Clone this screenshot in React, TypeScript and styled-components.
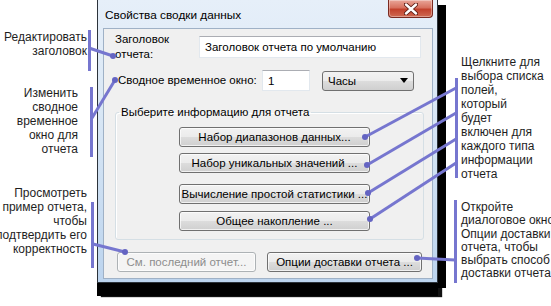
import React from 'react';
import styled, { createGlobalStyle } from 'styled-components';

const GlobalStyle = createGlobalStyle`
  html, body {
    margin: 0;
    background: #fff;
    overflow: hidden;
  }
`;

const CALLOUT = '#7676cf';

const Page = styled.div`
  position: relative;
  display: flex;
  width: 551px;
  height: 306px;
  overflow: hidden;
  font-family: 'Liberation Sans', Arial, sans-serif;
`;

const NotesColumn = styled.div<{ $width: number }>`
  display: flex;
  flex-direction: column;
  flex-shrink: 0;
  width: ${(p) => p.$width}px;
`;

const Note = styled.div<{ $top: number; $right?: number; $align?: 'start' | 'end'; $lh?: number }>`
  display: flex;
  flex-direction: column;
  align-items: ${(p) => (p.$align === 'start' ? 'flex-start' : 'flex-end')};
  margin-top: ${(p) => p.$top}px;
  padding-right: ${(p) => p.$right ?? 0}px;
  padding-left: ${(p) => (p.$align === 'start' ? 15 : 0)}px;
  font-size: 12px;
  line-height: ${(p) => p.$lh ?? 14}px;
  color: #1e1e1e;
`;

const NoteLine = styled.span`
  display: block;
  white-space: nowrap;
`;

const Window = styled.div`
  flex-shrink: 0;
  box-sizing: border-box;
  width: 341px;
  height: 283px;
  margin-left: 9px;
  margin-right: 8px;
  padding: 0 4px 3px 5px;
  border: 1px solid #2c333b;
  border-top: none;
  background: linear-gradient(to bottom, #e6eff9 0%, #d9e7f5 40%, #bcd4ee 100%);
  box-shadow: 8px 5px 0 #000, 0 13px 0 #000, 4px 14px 1px #111;
  font-size: 11.5px;
  color: #000;
`;

const TitleBar = styled.div`
  display: flex;
  justify-content: space-between;
  align-items: flex-start;
  height: 28px;
`;

const Title = styled.div`
  padding: 8px 0 0 2px;
  font-size: 11.8px;
  line-height: 15px;
`;

const CloseButton = styled.div`
  display: flex;
  align-items: center;
  justify-content: center;
  width: 45px;
  height: 18px;
  box-sizing: border-box;
  border: 1px solid #7a2a20;
  border-top: none;
  border-radius: 0 0 4px 4px;
  background: linear-gradient(to bottom, #e9a699 0%, #d7715f 45%, #c2412c 55%, #cf6a52 100%);
  box-shadow: inset 0 0 0 1px rgba(255, 255, 255, 0.35);
`;

const Client = styled.div`
  display: flex;
  flex-direction: column;
  box-sizing: border-box;
  height: 251px;
  border: 1px solid #9fb1c6;
  background: #f0f0f0;
`;

const Row = styled.div<{ $top: number; $left: number; $height: number }>`
  display: flex;
  align-items: center;
  height: ${(p) => p.$height}px;
  margin-top: ${(p) => p.$top}px;
  padding-left: ${(p) => p.$left}px;
`;

const FieldLabel = styled.div<{ $width: number }>`
  flex-shrink: 0;
  width: ${(p) => p.$width}px;
  line-height: 15px;
  white-space: nowrap;
`;

const TextInput = styled.div<{ $width: number; $height: number }>`
  box-sizing: border-box;
  width: ${(p) => p.$width}px;
  height: ${(p) => p.$height}px;
  padding-left: 5px;
  display: flex;
  align-items: center;
  background: #fff;
  border: 1px solid #e2e8ee;
  border-top-color: #abadb3;
`;

const Select = styled.div`
  box-sizing: border-box;
  display: flex;
  align-items: center;
  justify-content: space-between;
  width: 92px;
  height: 20px;
  margin-left: 12px;
  padding: 0 5px;
  border: 1px solid #707070;
  border-radius: 3px;
  background: linear-gradient(to bottom, #f2f2f2 0%, #ebebeb 50%, #dddddd 50%, #cfcfcf 100%);
`;

const Arrow = styled.span`
  width: 0;
  height: 0;
  border-left: 4px solid transparent;
  border-right: 4px solid transparent;
  border-top: 5px solid #000;
`;

const Group = styled.fieldset`
  box-sizing: border-box;
  width: 309px;
  margin: 14px 0 0 11px;
  padding: 7px 0 8px 0;
  border: 1px solid #d5dfe5;
  border-radius: 3px;
  box-shadow: inset 1px 1px 0 #fff;
`;

const Legend = styled.legend`
  margin-left: 3px;
  padding: 0 2px;
  line-height: 15px;
`;

const GroupButtons = styled.div`
  display: flex;
  flex-direction: column;
  align-items: flex-start;
  padding-left: 63px;
`;

const Button = styled.div<{ $width: number; $top?: number; $disabled?: boolean }>`
  box-sizing: border-box;
  display: flex;
  align-items: center;
  justify-content: center;
  width: ${(p) => p.$width}px;
  height: 20px;
  margin-top: ${(p) => p.$top ?? 0}px;
  border: 1px solid ${(p) => (p.$disabled ? '#adb2b5' : '#707070')};
  border-radius: 3px;
  white-space: nowrap;
  color: ${(p) => (p.$disabled ? '#8d8d8d' : '#000')};
  background: ${(p) =>
    p.$disabled
      ? '#f4f4f4'
      : 'linear-gradient(to bottom, #f2f2f2 0%, #ebebeb 50%, #dddddd 50%, #cfcfcf 100%)'};
  box-shadow: inset 0 0 0 1px rgba(255, 255, 255, 0.7);
`;

const ButtonRow = styled.div`
  display: flex;
  gap: 11px;
  margin: 12px 0 0 13px;
`;

const Overlay = styled.svg`
  position: absolute;
  left: 0;
  top: 0;
  pointer-events: none;
`;

const bars = [
  { x: 88, y: 30, h: 41 },
  { x: 90, y: 87, h: 70 },
  { x: 91, y: 202, h: 66 },
  { x: 455, y: 78, h: 100 },
  { x: 454, y: 200, h: 83 },
];

const leaders = [
  [89, 48, 113, 56],
  [92, 118, 115, 80],
  [93, 244, 125, 252],
  [456, 88, 365, 137],
  [456, 113, 367, 165],
  [456, 139, 368, 193],
  [456, 163, 370, 219],
  [455, 260, 417, 258],
];

const leftNotes = [
  { top: 30, right: 1, lines: ['Редактировать', 'заголовок'] },
  { top: 28, right: 10, lines: ['Изменить', 'сводное', 'временное', 'окно для', 'отчета'] },
  { top: 30, right: 1, lines: ['Просмотреть', 'пример отчета,', 'чтобы', 'подтвердить его', 'корректность'] },
];

const rightNotes = [
  {
    top: 55,
    lh: 14,
    lines: ['Щелкните для', 'выбора списка', 'полей,', 'который', 'будет', 'включен для', 'каждого типа', 'информации', 'отчета'],
  },
  {
    top: 20,
    lh: 13.3,
    lines: ['Откройте', 'диалоговое окно', 'Опции доставки', 'отчета, чтобы', 'выбрать способ', 'доставки отчета'],
  },
];

const groupButtons = [
  { label: 'Набор диапазонов данных...', top: 0 },
  { label: 'Набор уникальных значений ...', top: 6 },
  { label: 'Вычисление простой статистики ...', top: 11 },
  { label: 'Общее накопление ...', top: 7 },
];

const App: React.FC = () => (
  <>
    <GlobalStyle />
    <Page>
      <NotesColumn $width={88}>
        {leftNotes.map((n, i) => (
          <Note key={i} $top={n.top} $right={n.right}>
            {n.lines.map((l) => (
              <NoteLine key={l}>{l}</NoteLine>
            ))}
          </Note>
        ))}
      </NotesColumn>

      <Window>
        <TitleBar>
          <Title>Свойства сводки данных</Title>
          <CloseButton>
            <svg width="14" height="12" viewBox="0 0 14 12">
              <path d="M2 1.5 L12 10.5 M12 1.5 L2 10.5" stroke="#5b1a12" strokeWidth="4.2" strokeLinecap="round" />
              <path d="M2 1.5 L12 10.5 M12 1.5 L2 10.5" stroke="#fff" strokeWidth="2.4" strokeLinecap="round" />
            </svg>
          </CloseButton>
        </TitleBar>
        <Client>
          <Row $top={7} $left={11} $height={22}>
            <FieldLabel $width={84}>
              Заголовок
              <br />
              отчета:
            </FieldLabel>
            <TextInput $width={222} $height={22}>
              Заголовок отчета по умолчанию
            </TextInput>
          </Row>
          <Row $top={12} $left={14} $height={21}>
            <FieldLabel $width={144}>Сводное временное окно:</FieldLabel>
            <TextInput $width={48} $height={21}>
              1
            </TextInput>
            <Select>
              <span>Часы</span>
              <Arrow />
            </Select>
          </Row>
          <Group>
            <Legend>Выберите информацию для отчета</Legend>
            <GroupButtons>
              {groupButtons.map((b) => (
                <Button key={b.label} $width={191} $top={b.top}>
                  {b.label}
                </Button>
              ))}
            </GroupButtons>
          </Group>
          <ButtonRow>
            <Button $width={139} $disabled>
              См. последний отчет...
            </Button>
            <Button $width={155}>Опции доставки отчета ...</Button>
          </ButtonRow>
        </Client>
      </Window>

      <NotesColumn $width={105}>
        {rightNotes.map((n, i) => (
          <Note key={i} $top={n.top} $align="start" $lh={n.lh}>
            {n.lines.map((l) => (
              <NoteLine key={l}>{l}</NoteLine>
            ))}
          </Note>
        ))}
      </NotesColumn>

      <Overlay width={551} height={306} viewBox="0 0 551 306">
        {bars.map((b, i) => (
          <rect key={i} x={b.x} y={b.y} width={3} height={b.h} fill={CALLOUT} />
        ))}
        {leaders.map(([x1, y1, x2, y2], i) => (
          <g key={i}>
            <line x1={x1} y1={y1} x2={x2} y2={y2} stroke={CALLOUT} strokeWidth={3} />
            <circle cx={x2} cy={y2} r={3} fill="#6464c2" />
          </g>
        ))}
      </Overlay>
    </Page>
  </>
);

export default App;
